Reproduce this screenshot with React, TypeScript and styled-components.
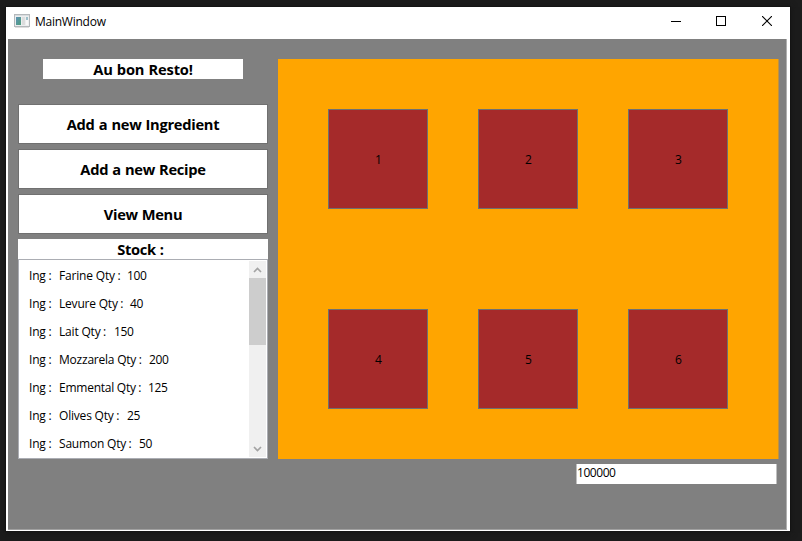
import React from "react";
import styled, { createGlobalStyle } from "styled-components";

const GlobalStyle = createGlobalStyle`
  * { box-sizing: border-box; }
  body {
    margin: 0;
    background: #1c1c1c;
    color: #000;
    font-family: "Open Sans", "Noto Sans", sans-serif;
    font-size: 12px;
    overflow: hidden;
  }
`;

const Desktop = styled.div`
  width: 802px;
  height: 541px;
  padding: 7px 0 0 6px;
  background: #1c1c1c;
`;

const Window = styled.div`
  width: 784px;
  height: 524px;
  background: #fff;
  box-shadow: 0 0 0 1px #141414, 0 1px 6px 1px #151515;
`;

const TitleBar = styled.header`
  display: flex;
  align-items: center;
  height: 32px;
  padding-left: 8px;

  > svg { flex: none; margin-top: -4px; }
`;

const Title = styled.span<{ $spacing: number }>`
  flex: 1;
  margin-left: 5px;
  margin-top: -2px;
  line-height: 16px;
  letter-spacing: ${(p) => p.$spacing}px;
`;

const Controls = styled.div`
  display: flex;
  height: 100%;
`;

const ControlButton = styled.button<{ $width: number }>`
  width: ${(p) => p.$width}px;
  height: 28px;
  padding: 0;
  border: 0;
  background: transparent;
  display: grid;
  place-items: center;
`;

const Client = styled.main`
  display: flex;
  gap: 10px;
  width: 779px;
  height: 491px;
  margin-left: 2px;
  padding: 20px 0 0 10px;
  background: #808080;
  border-right: 1px solid #b0b0b0;
  border-bottom: 1px solid #a0a0a0;
`;

const Sidebar = styled.section`
  display: flex;
  flex-direction: column;
  flex: none;
  width: 250px;
`;

const Heading = styled.div<{ $width: number; $spacing: number; $shift?: number }>`
  flex: none;
  align-self: center;
  width: ${(p) => p.$width}px;
  height: 20px;
  background: #fff;
  text-align: center;
  font-size: 14.67px;
  line-height: 21px;
  font-weight: 700;
  letter-spacing: ${(p) => p.$spacing}px;
  word-spacing: 0.5px;
  text-indent: ${(p) => p.$shift ?? 0}px;
`;

const Actions = styled.nav`
  display: flex;
  flex-direction: column;
  gap: 5px;
  margin: 25px 0 5px;
`;

const ActionButton = styled.button<{ $spacing: number }>`
  height: 40px;
  padding: 0 0 1px;
  border: 1px solid #707070;
  background: #fff;
  color: #000;
  font: 700 14.67px "Open Sans", "Noto Sans", sans-serif;
  letter-spacing: ${(p) => p.$spacing}px;
  word-spacing: 0.6px;
`;

const StockList = styled.div`
  display: flex;
  height: 200px;
  border: 1px solid #abadb3;
  background: #fff;
  padding: 1px;
`;

const Rows = styled.ul`
  flex: 1;
  margin: 0;
  padding: 1px 0 0 9px;
  list-style: none;
  overflow: hidden;
`;

const Row = styled.li`
  display: flex;
  height: 28px;
  line-height: 27px;
  white-space: nowrap;
`;

const Cell = styled.span<{ $width?: number; $spacing: number }>`
  flex: none;
  width: ${(p) => (p.$width ? p.$width + "px" : "auto")};
  letter-spacing: ${(p) => p.$spacing}px;
`;

const Colon = styled.span`
  margin-left: -0.4px;
`;

const ScrollBar = styled.div`
  display: grid;
  grid-template-rows: 17px 1fr 17px;
  width: 17px;
  background: #f0f0f0;
`;

const Thumb = styled.div`
  height: 67px;
  background: #cdcdcd;
`;

const Content = styled.section`
  display: flex;
  flex-direction: column;
  flex: none;
  width: 501px;
`;

const Room = styled.div`
  display: grid;
  grid-template-columns: repeat(3, 100px);
  grid-template-rows: repeat(2, 100px);
  column-gap: 50px;
  row-gap: 100px;
  height: 400px;
  padding: 50px;
  background: #ffa500;
  border-right: 1px solid #bf9240;
`;

const Table = styled.button`
  padding: 0 0 0 1px;
  border: 1px solid #707070;
  background: #a52a2a;
  color: #000;
  font: 12px "Open Sans", "Noto Sans", sans-serif;
`;

const Balance = styled.div`
  align-self: flex-end;
  width: 201px;
  height: 20px;
  margin: 5px 2px 0 0;
  border-left: 1px solid #bfbfbf;
  border-right: 1px solid #bfbfbf;
  background: #fff;
  line-height: 17px;
  letter-spacing: -0.45px;
`;

const actions = [
  { label: "Add a new Ingredient", spacing: -0.28 },
  { label: "Add a new Recipe", spacing: -0.28 },
  { label: "View Menu", spacing: -0.33 },
];

const stock = [
  { name: "Farine", quantity: 100, width: 68, spacing: -0.18 },
  { name: "Levure", quantity: 40, width: 71, spacing: -0.2 },
  { name: "Lait", quantity: 150, width: 55, spacing: -0.18 },
  { name: "Mozzarela", quantity: 200, width: 90, spacing: -0.22 },
  { name: "Emmental", quantity: 125, width: 89, spacing: -0.25 },
  { name: "Olives", quantity: 25, width: 68, spacing: -0.2 },
  { name: "Saumon", quantity: 50, width: 80, spacing: -0.2 },
];

const AppIcon = () => (
  <svg width="16" height="14" viewBox="0 0 16 14" shapeRendering="crispEdges">
    <defs>
      <linearGradient id="pane" x1="0" y1="0" x2="1" y2="1">
        <stop offset="0" stopColor="#5d91b5" />
        <stop offset="1" stopColor="#4f9f7c" />
      </linearGradient>
    </defs>
    <rect width="16" height="13" y="0" fill="#b4b8bb" />
    <rect x="1" y="1" width="14" height="11" fill="#eceeef" />
    <rect x="1" y="1" width="14" height="1" fill="#d8dcdf" />
    <rect x="2" y="3" width="5" height="8" fill="url(#pane)" />
    <rect x="8" y="3" width="3" height="8" fill="#dcdddd" />
    <rect x="12" y="3" width="2" height="3" fill="#9cbfca" />
    <rect x="12" y="6" width="2" height="5" fill="#f8f8f8" />
    <rect x="1" y="13" width="14" height="1" fill="#dedede" />
  </svg>
);

const Chevron = ({ down = false }: { down?: boolean }) => (
  <svg width="17" height="17" viewBox="0 0 17 17" fill="none" stroke="#a3a3a3" strokeWidth="1.7">
    <path d={down ? "M5 7 8.5 10.5 12 7" : "M5 11 8.5 7.5 12 11"} />
  </svg>
);

export default function App() {
  return (
    <Desktop>
      <GlobalStyle />
      <Window>
        <TitleBar>
          <AppIcon />
          <Title $spacing={-0.25}>MainWindow</Title>
          <Controls>
            <ControlButton $width={44} aria-label="Minimize">
              <svg width="10" height="10" shapeRendering="crispEdges">
                <path d="M0 5.5H10" stroke="#000" />
              </svg>
            </ControlButton>
            <ControlButton $width={46} aria-label="Maximize">
              <svg width="10" height="10" shapeRendering="crispEdges">
                <rect x=".5" y=".5" width="9" height="9" fill="none" stroke="#000" />
              </svg>
            </ControlButton>
            <ControlButton $width={46} aria-label="Close">
              <svg width="10" height="10">
                <path d="M0 0 10 10M10 0 0 10" stroke="#000" strokeWidth="1.1" />
              </svg>
            </ControlButton>
          </Controls>
        </TitleBar>
        <Client>
          <Sidebar>
            <Heading $width={200} $spacing={-0.15}>Au bon Resto!</Heading>
            <Actions>
              {actions.map((a) => (
                <ActionButton key={a.label} $spacing={a.spacing}>{a.label}</ActionButton>
              ))}
            </Actions>
            <Heading $width={250} $spacing={-0.3} $shift={-5}>Stock :</Heading>
            <StockList>
              <Rows>
                {stock.map((s) => (
                  <Row key={s.name}>
                    <Cell $width={30} $spacing={-0.2}>Ing :</Cell>
                    <Cell $width={s.width} $spacing={s.spacing}>
                      {s.name} Qty<Colon> :</Colon>
                    </Cell>
                    <Cell $spacing={-0.4}>{s.quantity}</Cell>
                  </Row>
                ))}
              </Rows>
              <ScrollBar>
                <Chevron />
                <Thumb />
                <Chevron down />
              </ScrollBar>
            </StockList>
          </Sidebar>
          <Content>
            <Room>
              {[1, 2, 3, 4, 5, 6].map((n) => (
                <Table key={n}>{n}</Table>
              ))}
            </Room>
            <Balance>100000</Balance>
          </Content>
        </Client>
      </Window>
    </Desktop>
  );
}
